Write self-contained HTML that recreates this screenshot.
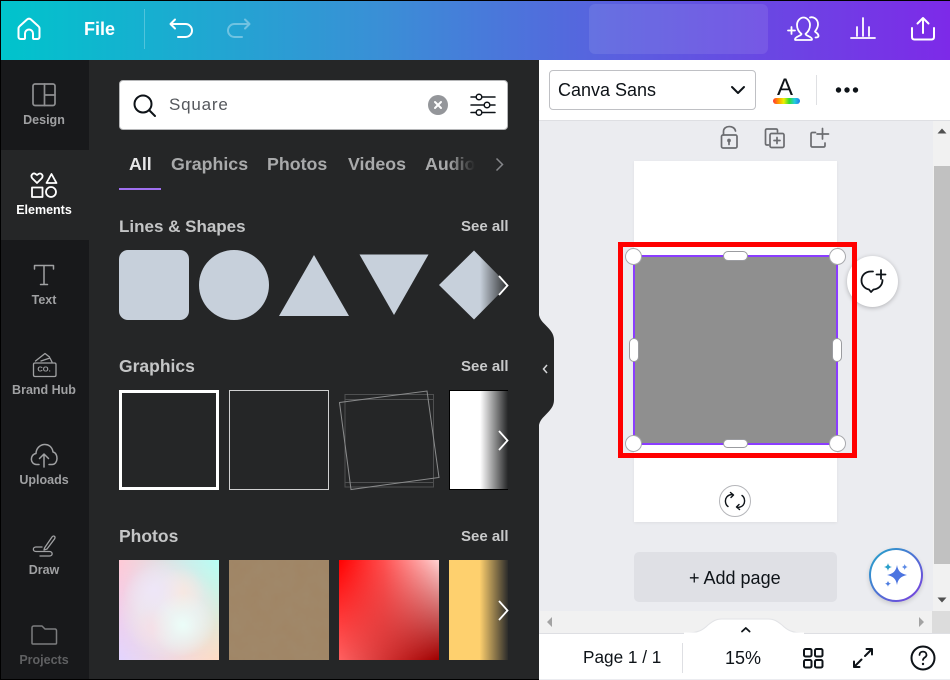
<!DOCTYPE html>
<html><head><meta charset="utf-8"><style>
*{box-sizing:border-box}
html,body{margin:0;padding:0;width:950px;height:680px;overflow:hidden;background:#000}
body{position:relative;font-family:"Liberation Sans",sans-serif}
.a{position:absolute}
.t{position:absolute;white-space:nowrap;line-height:1}
.nav{position:absolute;left:0;width:88px;text-align:center;font-size:12.5px;font-weight:700;color:#a0a1a3;line-height:14px}
svg{position:absolute;overflow:visible}
.h{font-size:17.5px;font-weight:700;color:#c4c5c6}
.s{font-size:15px;font-weight:700;color:#c8c9ca;left:461px}
.tab{font-size:17.8px;font-weight:700;color:#a9aaab;top:156px}
.h2{position:absolute;background:#fff;border:1px solid #9b9ca0;border-radius:5px}
.c{position:absolute;width:17px;height:17px;border-radius:50%;background:#fff;border:1px solid #a8a9ad}
</style></head><body>
<div class="a" style="left:1px;top:1px;width:949px;height:59px;background:linear-gradient(90deg,#00c4cc,#3a8fd6 40%,#5a5fdf 65%,#7d2ae8)"></div>
<div class="a" style="left:589px;top:4px;width:179px;height:50px;border-radius:6px;background:rgba(255,255,255,.09)"></div>
<div class="t" style="left:84px;top:20px;font-size:18px;font-weight:700;color:#fff">File</div>
<div class="a" style="left:144px;top:9px;width:1px;height:40px;background:rgba(255,255,255,.25)"></div>
<svg style="left:0;top:0" width="950" height="60" fill="none" stroke="#fff" stroke-width="2" stroke-linecap="round" stroke-linejoin="round">
<path d="M18.500 37V28.500c0-1 .5-1.800 1.200-2.400L27 19.500c1.200-1 2.800-1 4 0l7.300 6.600c.7.600 1.200 1.400 1.200 2.400V37c0 1.200-.8 2-2 2H34c-.6 0-1-.4-1-1v-4.500a4 4 0 0 0-8 0V38c0 .6-.4 1-1 1h-3.500c-1.200 0-2-.8-2-2z"/>
<path d="M175 19.500l-4.500 4.500 4.500 4.500M171 24h14.500a6.500 6.500 0 0 1 0 13H178"/>
<g opacity=".35"><path d="M245 19.500l4.500 4.500-4.500 4.500M249 24h-14.500a6.500 6.500 0 0 0 0 13H242"/></g>
<path d="M788 30.500h7M791.500 27v7" stroke-width="1.800"/>
<path d="M795 39.500c0-3 6-3.500 6.500-5.500-3-2.500-4.500-6-4.500-9 0-4 3-7.500 6.500-7.500s6.500 3.500 6.500 7.500c0 3-1.500 6.500-4.500 9 .5 2 6.500 2.500 6.500 5.500 0 .5-.5.5-1 .5h-15.500c-.5 0-.5 0-.5-.5zM810 17.500c3-1 8 1 8 7 0 3-1.500 5-3 7 1 1.500 3.500 1.800 3.500 4.500 0 1-1.500 1.500-3 1.500" stroke-width="1.800"/>
<path d="M851 38h24M857 36V27M863 36V18M869 36V27" stroke-width="1.800"/>
<path d="M912 28v9c0 1.500.5 2.500 2.500 2.500h17c2 0 2.500-1 2.500-2.500v-9M923 33V19M917.500 23.500L923 18l5.500 5.500" stroke-width="2"/>
</svg>

<div class="a" style="left:1px;top:60px;width:88px;height:619px;background:#18191b"></div>
<div class="a" style="left:89px;top:60px;width:450px;height:619px;background:#252627"></div>
<div class="a" style="left:1px;top:150px;width:88px;height:90px;background:#252627"></div>
<div class="a" style="left:1px;top:60px;width:88px;height:90px;background:#18191b;border-bottom-right-radius:9px"></div>
<div class="a" style="left:1px;top:240px;width:88px;height:439px;background:#18191b;border-top-right-radius:9px"></div>

<svg style="left:0;top:0" width="100" height="680" fill="none" stroke="#8e8f91" stroke-width="1.700" stroke-linecap="round" stroke-linejoin="round">
<rect x="33" y="84" width="22" height="21.500" rx="2"/><path d="M44.500 84v21.500M44.500 95H55"/>
<g stroke="#fff" stroke-width="1.800"><path d="M37 183l-4.800-4.800c-2.200-3 1-5.700 3.300-4.200l1.500 1 1.500-1c2.300-1.500 5.500 1.200 3.300 4.200z"/><path d="M51.500 174l5 9h-10z"/><rect x="32" y="187.500" width="10.500" height="9.500"/><circle cx="51" cy="192" r="5"/></g>
<path d="M34.500 269v-3.500h19v3.500M44 265.500V284.500M40.500 284.500h7" stroke-width="1.500" stroke="#a0a1a3"/>
<path d="M33.500 364.500c0-1 .5-1.500 1.500-1.500h19.500c1 0 1.500.5 1.500 1.500v10.500c0 1-.5 1.500-1.500 1.500H35c-1 0-1.500-.5-1.500-1.500zM35.500 361l9.500-7.500 4.500 3.500M41 361l9-3 2 4" stroke-width="1.300" stroke="#a0a1a3"/>
<path d="M39 464.500h-2.500c-6.500 0-7-10-.5-11 .5-11 15.500-12.500 17-1.500 5.500 1 5.500 12.500-1 12.500H49M44 467V454M39.500 458.500l4.500-4.500 4.500 4.500" stroke-width="1.500" stroke="#a0a1a3"/>
<path d="M44.500 548l7.500-11c1.500-2 4-.5 2.500 2l-7.500 10-3 1zM42 547h-6c-3.500 0-3.500 4.500 0 4.500h13.500c3.500 0 3.500 4.500 0 4.500H40" stroke-width="1.300" stroke="#a0a1a3"/>
<path d="M32 628c0-1 0-2 2-2h8l3 3h10c1 0 1.500 1 1.500 2v12c0 1-.5 1-1 1H33c-.5 0-1 0-1-1z" stroke="#7c7d7f" stroke-width="1.500"/>
<text x="44" y="371.500" text-anchor="middle" font-family="Liberation Sans" font-size="7.500" font-weight="700" fill="#a0a1a3" stroke="none">CO.</text>
</svg>
<div class="nav" style="top:113px">Design</div>
<div class="nav" style="top:203px;color:#fff">Elements</div>
<div class="nav" style="top:293px">Text</div>
<div class="nav" style="top:383px">Brand Hub</div>
<div class="nav" style="top:473px">Uploads</div>
<div class="nav" style="top:563px">Draw</div>
<div class="nav" style="top:653px;color:#5f6062">Projects</div>

<!-- search -->
<div class="a" style="left:119px;top:80px;width:389px;height:50px;background:#fff;border-radius:4px;border:1px solid #b5b6b8"></div>
<svg style="left:0;top:0" width="540" height="140" fill="none" stroke="#0e1318" stroke-width="2" stroke-linecap="round">
<circle cx="143" cy="104" r="8.500"/><path d="M149.500 110.500l5.500 5.500"/>
<circle cx="438" cy="105" r="10" fill="#94969a" stroke="none"/><path d="M435 102l6 6M441 102l-6 6" stroke="#fff" stroke-width="2"/>
<path d="M471 97h24M471 105h24M471 112.500h24" stroke-width="1.500"/>
<circle cx="479" cy="97" r="2.800" fill="#fff" stroke-width="1.500"/><circle cx="487" cy="105" r="2.800" fill="#fff" stroke-width="1.500"/><circle cx="479" cy="112.500" r="2.800" fill="#fff" stroke-width="1.500"/>
</svg>
<div class="t" style="left:169px;top:96px;font-size:17px;color:#55585d;letter-spacing:.8px">Square</div>

<!-- tabs -->
<div class="t tab" style="left:129px;color:#e6e6e7">All</div>
<div class="t tab" style="left:171px">Graphics</div>
<div class="t tab" style="left:267px">Photos</div>
<div class="t tab" style="left:348px">Videos</div>
<div class="t tab" style="left:425px">Audio</div>
<div class="a" style="left:448px;top:150px;width:30px;height:30px;background:linear-gradient(90deg,rgba(37,38,39,0),#252627 90%)"></div>
<svg style="left:0;top:0" width="540" height="200" fill="none" stroke="#85868a" stroke-width="1.500"><path d="M496.500 158.500l6 6-6 6"/></svg>
<div class="a" style="left:119px;top:188px;width:42px;height:2px;background:#a070f0"></div>

<div class="t h" style="left:119px;top:218px;font-size:17px">Lines &amp; Shapes</div>
<div class="t s" style="top:219px">See all</div>
<div class="t h" style="left:119px;top:358px">Graphics</div>
<div class="t s" style="top:359px">See all</div>
<div class="t h" style="left:119px;top:528px">Photos</div>
<div class="t s" style="top:529px">See all</div>

<!-- shapes -->
<div class="a" style="left:119px;top:250px;width:70px;height:70px;border-radius:9px;background:#c7d0db"></div>
<div class="a" style="left:199px;top:250px;width:70px;height:70px;border-radius:50%;background:#c7d0db"></div>
<svg style="left:0;top:0" width="540" height="680">
<path d="M314 255l35 61h-70z" fill="#c7d0db"/>
<path d="M359.500 254.500h69L394 315z" fill="#c7d0db"/>
<path d="M474 250.500l34 34.500-34 34.500-35-34.500z" fill="#c7d0db"/>
</svg>
<div class="a" style="left:480px;top:250px;width:29px;height:70px;background:linear-gradient(90deg,rgba(37,38,39,0),#252627)"></div>

<!-- graphics -->
<div class="a" style="left:119px;top:390px;width:100px;height:100px;border:3px solid #fff"></div>
<div class="a" style="left:229px;top:390px;width:100px;height:100px;border:1px solid #d0d0d0"></div>
<svg style="left:0;top:0" width="540" height="680" fill="none" stroke-width="1">
<path d="M345 394.500h88.500v92.500H345zM345 399.500h88M345 482.500h88" stroke="#4f5051"/>
<path d="M339.500 402.500l87.500-11.500 12 86.500-88 12z" stroke="#8a8b8c"/>
</svg>
<div class="a" style="left:449px;top:390px;width:59px;height:100px;background:linear-gradient(90deg,#fff 0,#fff 52%,#252627 100%);border:1px solid #000;border-right:0"></div>

<!-- photos -->
<div class="a" style="left:119px;top:560px;width:100px;height:100px;background:linear-gradient(90deg,#e3d5ff,#ffdcc4)"></div>
<div class="a" style="left:119px;top:560px;width:100px;height:100px;background:linear-gradient(90deg,#ffc9d6,#b5fff5);-webkit-mask-image:linear-gradient(180deg,#000,transparent);mask-image:linear-gradient(180deg,#000,transparent)"></div>
<div class="a" style="left:119px;top:560px;width:100px;height:100px;background:radial-gradient(circle at 64% 65%,rgba(235,255,249,.95) 0,rgba(235,255,249,.5) 14%,rgba(235,255,249,0) 35%),radial-gradient(circle at 35% 68%,rgba(255,215,225,.45) 0,rgba(255,215,225,0) 24%),radial-gradient(circle at 35% 30%,rgba(238,230,251,.8) 0,rgba(238,230,251,0) 32%),radial-gradient(circle at 62% 32%,rgba(253,232,220,.7) 0,rgba(253,232,220,0) 26%),radial-gradient(circle at 50% 50%,#eeeaee 0,rgba(238,234,238,.7) 40%,rgba(238,234,238,0) 70%)"></div>
<div class="a" style="left:229px;top:560px;width:100px;height:100px;background:#a08565"></div>
<svg style="left:229px;top:560px" width="100" height="100"><filter id="n" x="0" y="0" width="100%" height="100%"><feTurbulence type="fractalNoise" baseFrequency=".06" numOctaves="4" seed="4"/><feColorMatrix values="0 0 0 0 .35 0 0 0 0 .27 0 0 0 0 .17 0 0 0 .55 -.1"/></filter><rect width="100" height="100" filter="url(#n)"/></svg>
<div class="a" style="left:339px;top:560px;width:100px;height:100px;background:linear-gradient(90deg,#ff6262,#a00000)"></div>
<div class="a" style="left:339px;top:560px;width:100px;height:100px;background:linear-gradient(90deg,#f00 0,#ff5050 45%,#ffd2d2 100%);-webkit-mask-image:linear-gradient(180deg,#000,transparent);mask-image:linear-gradient(180deg,#000,transparent)"></div>
<div class="a" style="left:449px;top:560px;width:59px;height:100px;background:linear-gradient(90deg,#fed06e 0,#fed06e 52%,#2c2c2b 100%)"></div>

<svg style="left:0;top:0" width="540" height="680" fill="none" stroke="#fff" stroke-width="1.800"><path d="M499 276l8.500 9.500-8.500 9.500M499 431l8.500 9.500-8.500 9.500M499 601l8.500 9.500-8.500 9.500"/></svg>

<!-- right -->
<div class="a" style="left:539px;top:60px;width:411px;height:620px;background:#ebecf0"></div>
<div class="a" style="left:539px;top:60px;width:411px;height:61px;background:#fff;border-bottom:1px solid #dedfe3"></div>
<div class="a" style="left:549px;top:70px;width:207px;height:40px;border:1px solid #bfc0c4;border-radius:4px"></div>
<div class="t" style="left:558px;top:81px;font-size:18px;color:#0e1318">Canva Sans</div>
<div class="t" style="left:777px;top:76px;font-size:24px;color:#0e1318">A</div>
<div class="a" style="left:773px;top:98px;width:27px;height:6px;border-radius:3px;background:linear-gradient(90deg,#f33,#f90,#ee0,#3d3,#2cd,#27e)"></div>
<div class="a" style="left:816px;top:75px;width:1px;height:30px;background:#dfe0e3"></div>
<svg style="left:0;top:0" width="950" height="160" fill="none" stroke="#0e1318" stroke-width="2" stroke-linecap="round" stroke-linejoin="round">
<path d="M732 87l6 6 6-6"/>
<circle cx="838.500" cy="90" r="2.700" fill="#0e1318" stroke="none"/><circle cx="847" cy="90" r="2.700" fill="#0e1318" stroke="none"/><circle cx="855.500" cy="90" r="2.700" fill="#0e1318" stroke="none"/>
<g stroke="#6b6c70" stroke-width="1.700"><rect x="721.500" y="135" width="15.500" height="13" rx="1.500"/><path d="M723.500 135v-3.500c0-6.500 11-6.500 12-.5M729 144.500v-3"/><circle cx="729" cy="140.500" r="1" fill="#6b6c70"/>
<path d="M768.500 145h-1.500c-1 0-1.500-.5-1.500-1.500v-13c0-1 .5-1.500 1.500-1.500h9c1 0 1.500.5 1.500 1.500v1.500"/><rect x="770" y="133.500" width="14" height="14" rx="1.500"/><path d="M777 137.500v6M774 140.500h6"/>
<path d="M815.500 132.500h-3c-1 0-1.500.5-1.500 1.500v11.500c0 1 .5 1.500 1.500 1.500h11c1 0 1.500-.5 1.500-1.500v-2.500M822.500 128.500v10.500M817 134h11.500"/></g>
</svg>

<!-- page -->
<div class="a" style="left:634px;top:161px;width:203px;height:361px;background:#fff;box-shadow:0 1px 3px rgba(0,0,0,.06)"></div>
<div class="a" style="left:633px;top:255px;width:205px;height:190px;background:#8f8f8f;border:2px solid #8b3dff"></div>
<div class="a" style="left:618px;top:242px;width:239px;height:216px;border:5px solid #f00"></div>
<div class="c" style="left:625px;top:248px"></div>
<div class="c" style="left:829px;top:248px"></div>
<div class="c" style="left:625px;top:435px"></div>
<div class="c" style="left:829px;top:435px"></div>
<div class="h2" style="left:723px;top:251px;width:25px;height:10px"></div>
<div class="h2" style="left:723px;top:439px;width:25px;height:9px"></div>
<div class="h2" style="left:629px;top:338px;width:10px;height:24px"></div>
<div class="h2" style="left:832px;top:338px;width:10px;height:24px"></div>

<div class="a" style="left:847px;top:256px;width:51px;height:51px;border-radius:50%;background:#fff;box-shadow:0 1px 5px rgba(0,0,0,.25)"></div>
<div class="a" style="left:852px;top:242px;width:5px;height:216px;background:#f00"></div>
<svg style="left:0;top:0" width="950" height="680" fill="none" stroke="#0e1318" stroke-width="1.800" stroke-linecap="round" stroke-linejoin="round">
<path d="M873 271.500h-2c-6 0-9.500 4-9.500 9 0 4.500 3 8 7.500 9l2 2.500 2.500-2.500c5-.5 9-4 9-9.500"/><path d="M881 270v9M876.500 274.500h9"/>
<circle cx="735" cy="501" r="15.500" fill="#fff" stroke="#b5b6ba" stroke-width="1"/>
<path d="M733 494.500c-6 0-8 4-7.500 7.500.2 2 1 3.500 2.500 4.500M730.500 492.500l3 2.500-2.500 2.500M737 507.500c6 0 8-4 7.500-7.500-.2-2-1-3.500-2.500-4.500M739.500 509.500l-3-2.500 2.500-2.500" stroke-width="1.400"/>
</svg>

<div class="a" style="left:634px;top:552px;width:203px;height:50px;border-radius:5px;background:#dfe0e5"></div>
<div class="t" style="left:689px;top:569px;font-size:18px;color:#0e1318">+ Add page</div>

<!-- scrollbars -->
<div class="a" style="left:933px;top:121px;width:17px;height:490px;background:#f1f1f1"></div>
<div class="a" style="left:934px;top:166px;width:16px;height:398px;background:#c1c1c1"></div>
<div class="a" style="left:540px;top:611px;width:410px;height:22px;background:#f1f1f1"></div>
<div class="a" style="left:932px;top:611px;width:18px;height:22px;background:#dcdcdc"></div>
<svg style="left:0;top:0" width="950" height="680">
<path d="M937.500 133.500l4.500-5 4.500 5zM937.500 597.500l4.500 5 4.500-5z" fill="#505050"/>
<path d="M552 617v10l-5-5zM919 617v10l5-5z" fill="#a3a3a3"/>
</svg>

<div class="a" style="left:869px;top:548px;width:54px;height:54px;border-radius:50%;background:linear-gradient(135deg,#1fa8c9,#7d3adf);box-shadow:0 2px 5px rgba(0,0,0,.15)"></div>
<div class="a" style="left:871px;top:550px;width:50px;height:50px;border-radius:50%;background:#fff"></div>
<svg style="left:0;top:0" width="950" height="680">
<path d="M897 565c1 6 3.500 8.500 10 10-6.500 1.500-9 4-10 10-1-6-3.500-8.500-10-10 6.500-1.500 9-4 10-10z" fill="#4c74e0"/>
<path d="M888 563c.5 2.500 1.500 3.500 4 4-2.500.5-3.500 1.500-4 4-.5-2.500-1.500-3.500-4-4 2.500-.5 3.500-1.500 4-4z" fill="#2a9fc9"/>
<path d="M904.700 564c.3 1.700 1.300 2.700 3 3-1.700.3-2.700 1.300-3 3-.3-1.700-1.300-2.700-3-3 1.700-.3 2.700-1.300 3-3z" fill="#5c8ae6"/>
<path d="M888 580.700c.3 1.700 1.300 2.700 3 3-1.700.3-2.700 1.300-3 3-.3-1.700-1.300-2.700-3-3 1.700-.3 2.700-1.300 3-3z" fill="#4c7ce0"/>
</svg>

<!-- bottom -->
<div class="a" style="left:539px;top:633px;width:411px;height:46px;background:#fff;border-top:1px solid #dedfe3"></div>
<svg style="left:0;top:0" width="950" height="680">
<path d="M686 633c12 0 17-3 22-8 5-4 8-6 14-6h46c6 0 9 2 14 6 5 5 10 8 22 8z" fill="#fff" stroke="#e2e3e6"/>
<path d="M684 633.500h120" stroke="#fff" stroke-width="2" fill="none"/>
<path d="M742 631.500l3.800-3.500 3.800 3.500" stroke="#0e1318" stroke-width="1.800" fill="none" stroke-linecap="round" stroke-linejoin="round"/>
</svg>
<div class="t" style="left:583px;top:649px;font-size:17.2px;color:#0e1318">Page 1 / 1</div>
<div class="a" style="left:682px;top:643px;width:1px;height:30px;background:#dedfe3"></div>
<div class="t" style="left:725px;top:649px;font-size:18px;color:#0e1318">15%</div>
<svg style="left:0;top:0" width="950" height="680" fill="none" stroke="#0e1318" stroke-width="2" stroke-linecap="round" stroke-linejoin="round">
<rect x="804" y="649" width="7.500" height="7.500" rx="1.500"/><rect x="815" y="649" width="7.500" height="7.500" rx="1.500"/><rect x="804" y="660" width="7.500" height="7.500" rx="1.500"/><rect x="815" y="660" width="7.500" height="7.500" rx="1.500"/>
<path d="M854 667l7.500-7.500M854 661.500v5.500h5.500M865 656l7-7M866.500 649h5.500v5.500"/>
<circle cx="923" cy="658" r="11.500"/>
<path d="M919.500 655c0-4.500 7-4.500 7 0 0 2.500-3.500 2.500-3.500 5" stroke-width="1.800"/>
<circle cx="923" cy="664" r="1.200" fill="#0e1318" stroke="none"/>
</svg>

<!-- collapse handle -->
<svg style="left:0;top:0" width="950" height="680">
<path d="M538.500 310c0 8 3 11 7 15 5 5 8.500 9 8.500 15v60c0 6-3.500 10-8.500 15-4 4-7 7-7 15z" fill="#252627"/>
<path d="M547 365l-3.500 4 3.500 4" stroke="#d5d6d8" stroke-width="1.500" fill="none"/>
</svg>
</body></html>
